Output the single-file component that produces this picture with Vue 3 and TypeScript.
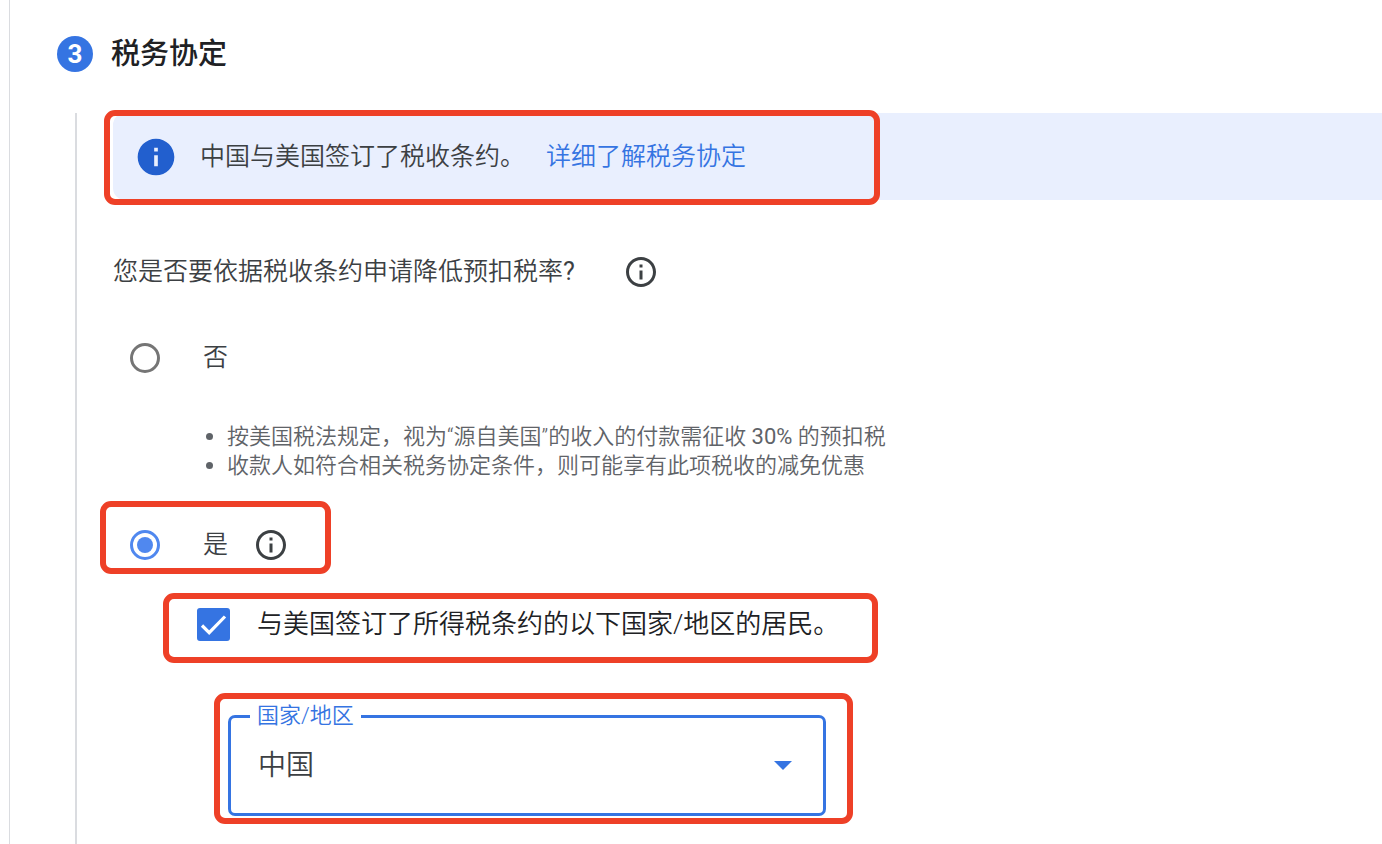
<script setup lang="ts">
import { ref } from 'vue'

const claimsReducedRate = ref<'no' | 'yes'>('yes')
const isResident = ref(true)
const country = ref('CN')

interface Note {
  before: string
  rate?: string
  after?: string
}

const notes: Note[] = [
  { before: '按美国税法规定，视为“源自美国”的收入的付款需征收 ', rate: '30%', after: ' 的预扣税' },
  { before: '收款人如符合相关税务协定条件，则可能享有此项税收的减免优惠' },
]
</script>

<template>
  <main class="page">
    <section class="step">
      <header class="step-header">
        <span class="step-number">3</span>
        <h2 class="step-title">税务协定</h2>
      </header>

      <div class="step-body">
        <div class="banner">
          <svg class="banner-icon" viewBox="0 0 24 24" aria-hidden="true">
            <path d="M12 2C6.48 2 2 6.48 2 12s4.48 10 10 10 10-4.48 10-10S17.52 2 12 2zm1 15h-2v-6h2v6zm0-8h-2V7h2v2z" />
          </svg>
          <span>中国与美国签订了税收条约。</span>
          <a class="banner-link" href="#">详细了解税务协定</a>
          <span class="mark mark-banner"></span>
        </div>

        <div role="radiogroup" aria-labelledby="question">
          <div class="row question">
            <span id="question">您是否要依据税收条约申请降低预扣税率<span class="latin">?</span></span>
            <button class="info" type="button" aria-label="详细信息">
              <svg viewBox="0 0 24 24" aria-hidden="true">
                <path d="M11 7h2v2h-2V7zm0 4h2v6h-2v-6zm1-9C6.48 2 2 6.48 2 12s4.48 10 10 10 10-4.48 10-10S17.52 2 12 2zm0 18c-4.41 0-8-3.59-8-8s3.59-8 8-8 8 3.59 8 8-3.59 8-8 8z" />
              </svg>
            </button>
          </div>

          <div class="row option option-no">
            <input id="claim-no" v-model="claimsReducedRate" class="radio" type="radio" name="claim" value="no" />
            <label for="claim-no">否</label>
          </div>

          <ul class="notes">
            <li v-for="note in notes" :key="note.before">
              <span>{{ note.before }}<span v-if="note.rate" class="latin">{{ note.rate }}</span>{{ note.after }}</span>
            </li>
          </ul>

          <div class="row option option-yes">
            <input id="claim-yes" v-model="claimsReducedRate" class="radio" type="radio" name="claim" value="yes" />
            <label for="claim-yes">是</label>
            <button class="info" type="button" aria-label="详细信息">
              <svg viewBox="0 0 24 24" aria-hidden="true">
                <path d="M11 7h2v2h-2V7zm0 4h2v6h-2v-6zm1-9C6.48 2 2 6.48 2 12s4.48 10 10 10 10-4.48 10-10S17.52 2 12 2zm0 18c-4.41 0-8-3.59-8-8s3.59-8 8-8 8 3.59 8 8-3.59 8-8 8z" />
              </svg>
            </button>
            <span class="mark mark-yes"></span>
          </div>
        </div>

        <div class="row resident">
          <span class="checkbox">
            <input id="resident" v-model="isResident" type="checkbox" />
            <svg v-if="isResident" viewBox="0 0 33 33" aria-hidden="true">
              <path d="M5 17.5L12.2 24.7L28 8.5" />
            </svg>
          </span>
          <label for="resident">与美国签订了所得税条约的以下国家/地区的居民。</label>
          <span class="mark mark-resident"></span>
        </div>

        <div class="field">
          <select id="country" v-model="country">
            <option value="CN">中国</option>
          </select>
          <label for="country">国家/地区</label>
          <svg class="arrow" viewBox="0 0 18 9" aria-hidden="true">
            <path d="M0 0H18L9 9Z" />
          </svg>
          <span class="mark mark-field"></span>
        </div>
      </div>
    </section>
  </main>
</template>

<style>
body {
  background: #fff;
}
</style>

<style scoped>
.page,
.page * {
  box-sizing: border-box;
}

.page {
  display: flex;
  min-height: 100vh;
  padding-left: 9px;
  overflow: hidden;
  font-family: Roboto, "Noto Sans CJK SC", sans-serif;
  font-size: 25px;
  font-weight: 350;
  line-height: 36px;
  color: #3c4043;
}

.latin {
  font-weight: 400;
}

.step {
  flex: 1;
  display: flex;
  flex-direction: column;
  padding: 36px 0 0 47px;
  border-left: 1px solid #dadce0;
}

.step-header {
  display: flex;
  align-items: center;
  gap: 18px;
  margin-bottom: 41px;
}

.step-number {
  width: 36px;
  height: 36px;
  border-radius: 50%;
  background: #3574e2;
  color: #fff;
  font-size: 26px;
  font-weight: 700;
  text-align: center;
}

.step-title {
  margin: 0;
  font-size: 29px;
  font-weight: 500;
  line-height: 36px;
  color: #202124;
}

.step-body {
  flex: 1;
  margin-left: 18px;
  padding-left: 36px;
  border-left: 2px solid #dadce0;
}

.banner {
  position: relative;
  display: flex;
  align-items: center;
  min-height: 87px;
  padding-left: 21px;
  border-radius: 12px 0 0 12px;
  background: #e9effe;
}

.banner-icon {
  width: 44px;
  height: 44px;
  margin-right: 22px;
  fill: #225fce;
}

.banner-link {
  margin-left: 21px;
  color: #3574e2;
  text-decoration: none;
}

.row {
  position: relative;
  display: flex;
  align-items: center;
  min-height: 36px;
}

.question {
  gap: 48px;
  margin-top: 54px;
}

.info {
  display: block;
  width: 36px;
  height: 36px;
  padding: 0;
  border: 0;
  background: none;
  cursor: pointer;
}

.info svg {
  display: block;
  width: 36px;
  height: 36px;
  fill: #3c4043;
}

.option {
  padding-left: 17px;
}

.option-no {
  margin-top: 50px;
}

.option-yes {
  width: fit-content;
  margin-top: 47px;
}

.option-yes .info {
  margin-left: 25px;
}

.radio {
  appearance: none;
  display: grid;
  place-items: center;
  width: 30px;
  height: 30px;
  margin: 0 43px 0 0;
  border: 3px solid #757575;
  border-radius: 50%;
}

.radio:checked {
  border-color: #5088ef;
}

.radio:checked::before {
  content: "";
  width: 16px;
  height: 16px;
  border-radius: 50%;
  background: #5088ef;
}

.notes {
  margin: 46px 0 0;
  padding: 0 0 0 93px;
  list-style: none;
  font-size: 22px;
  line-height: 29px;
  color: #5f6368;
}

.notes li {
  display: flex;
  align-items: center;
  gap: 14px;
}

.notes li::before {
  content: "";
  width: 7px;
  height: 7px;
  border-radius: 50%;
  background: #5f6368;
}

.resident {
  width: fit-content;
  gap: 27px;
  margin: 43px 0 0 84px;
  font-size: 26px;
  color: #202124;
}

.checkbox {
  display: grid;
  width: 33px;
  height: 33px;
}

.checkbox input,
.checkbox svg {
  grid-area: 1 / 1;
  width: 33px;
  height: 33px;
  margin: 0;
}

.checkbox input {
  appearance: none;
  border: 3px solid #5f6368;
  border-radius: 3px;
}

.checkbox input:checked {
  border-color: #3574e2;
  background: #3574e2;
}

.checkbox svg {
  fill: none;
  stroke: #fff;
  stroke-width: 3.2;
  pointer-events: none;
}

.field {
  position: relative;
  max-width: 598px;
  margin: 73px 24px 24px 115px;
}

.field select {
  appearance: none;
  display: block;
  width: 100%;
  height: 101px;
  padding: 0 48px 0 27px;
  border: 3px solid #3574e2;
  border-radius: 7px;
  outline: 0;
  background: #fff;
  color: #3c4043;
  font: inherit;
  font-size: 28px;
}

.field label {
  position: absolute;
  top: -14px;
  left: 22px;
  padding: 0 7px;
  background: #fff;
  color: #3574e2;
  font-size: 22px;
  line-height: 29px;
}

.arrow {
  position: absolute;
  top: 46px;
  right: 34px;
  width: 18px;
  height: 9px;
  fill: #3574e2;
  pointer-events: none;
}

.mark {
  position: absolute;
  border: 6px solid #ee4027;
  border-radius: 11px;
  pointer-events: none;
}

.mark-banner {
  inset: -3px auto -5px -9px;
  width: 776px;
}

.mark-yes {
  inset: -26px -42px -11px -13px;
}

.mark-resident {
  inset: -13px auto -21px -34px;
  width: 715px;
}

.mark-field {
  inset: -22px -27px -8px -14px;
}
</style>
